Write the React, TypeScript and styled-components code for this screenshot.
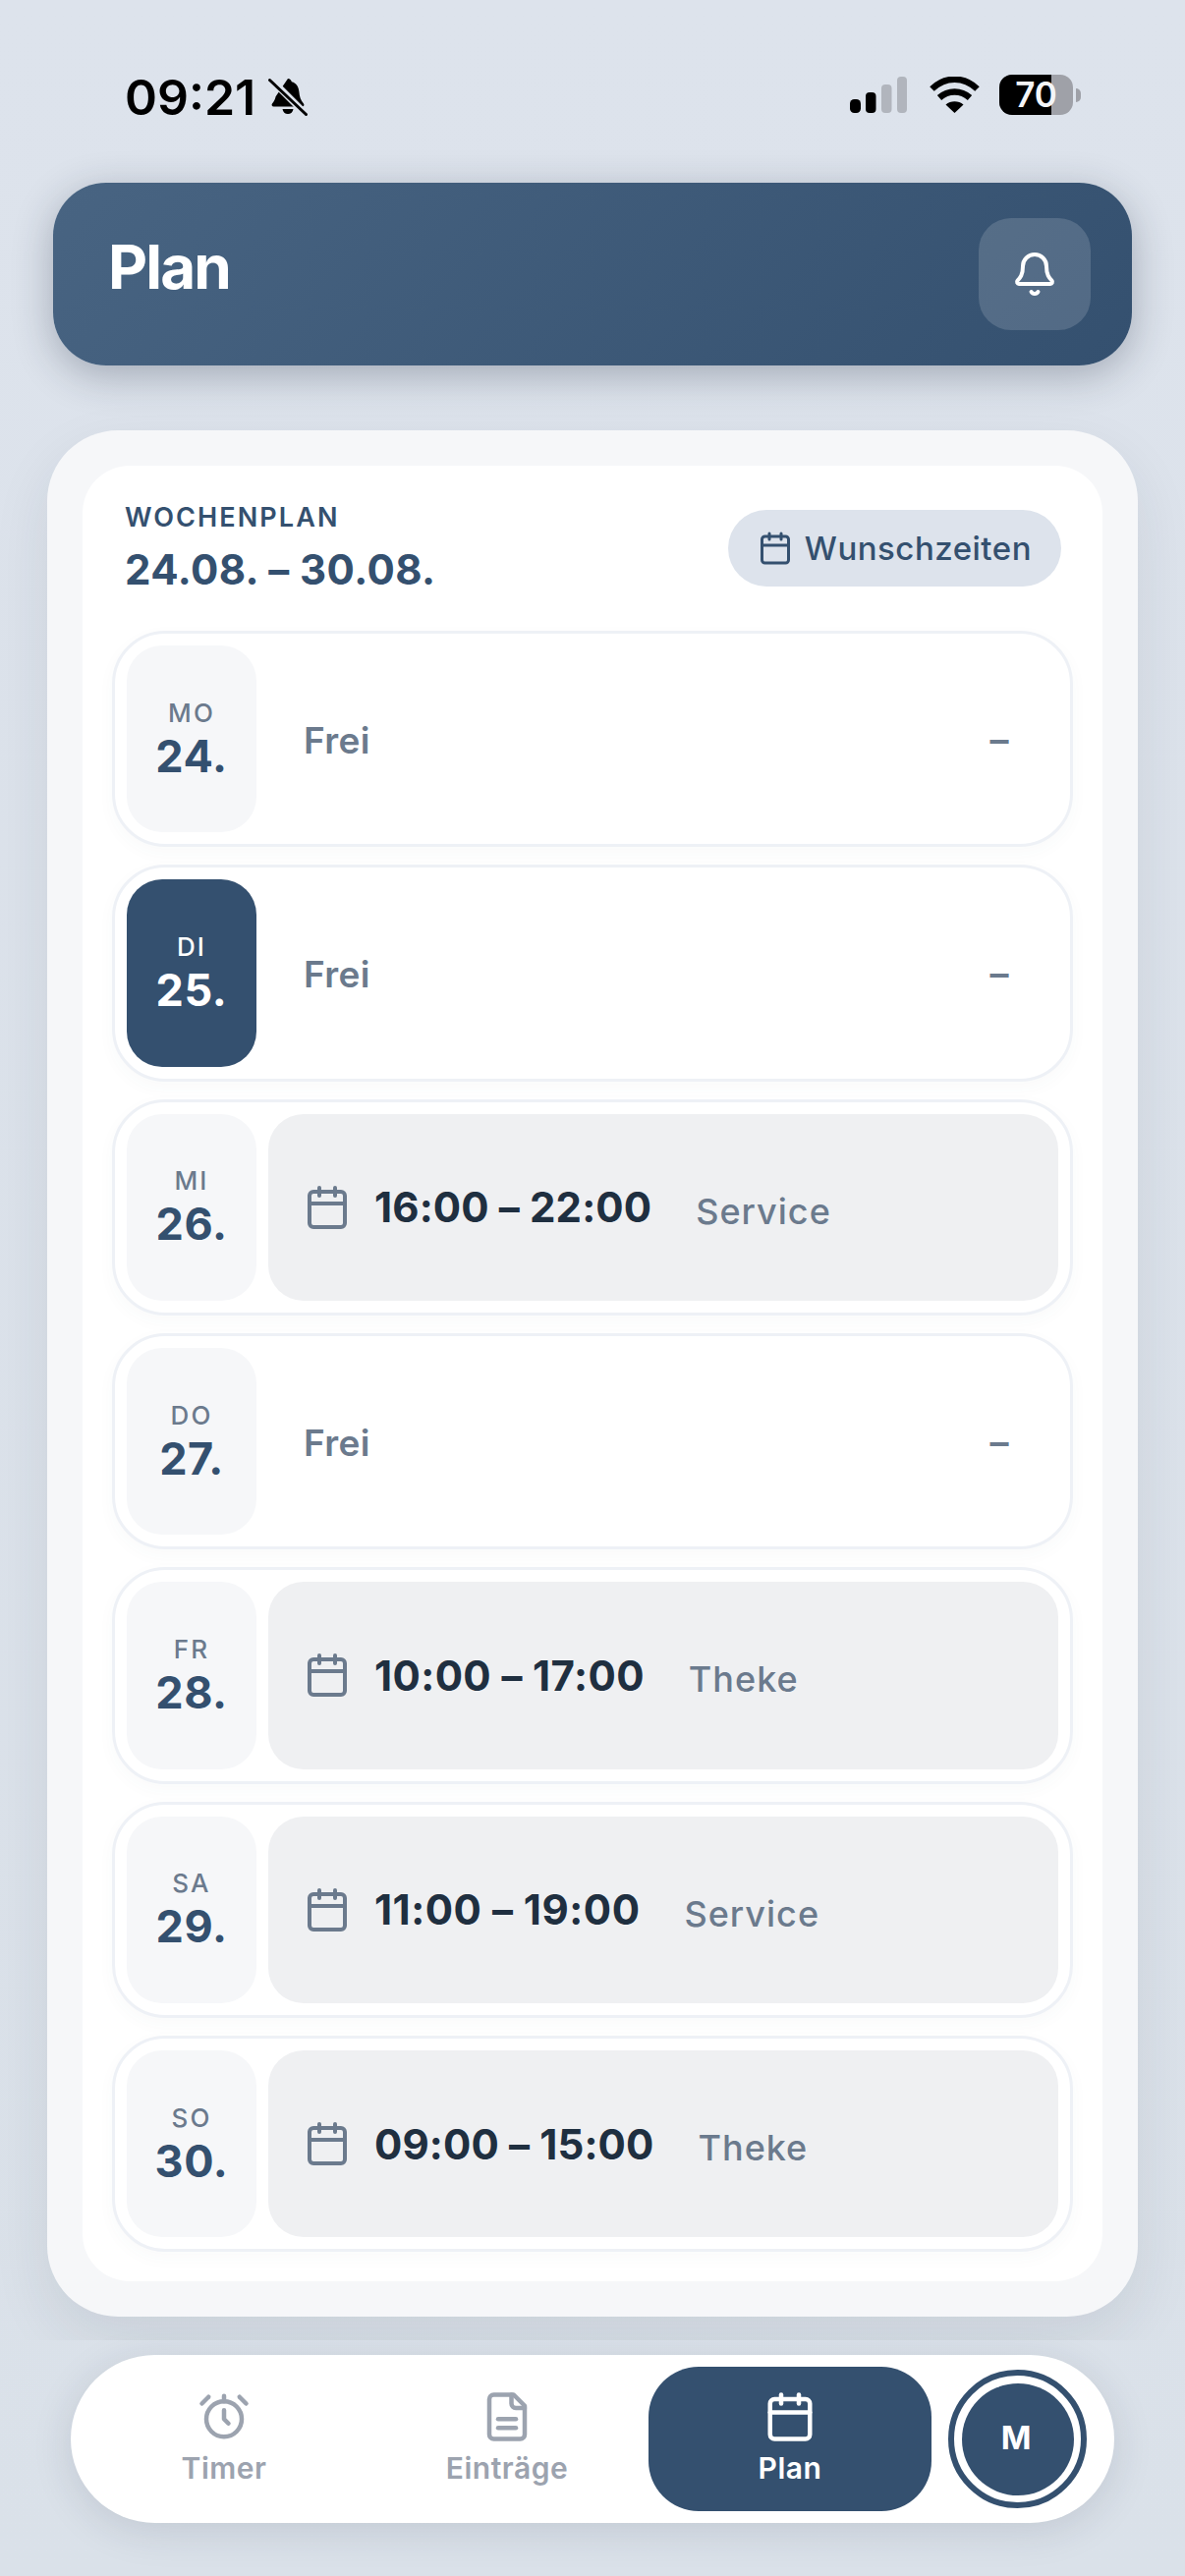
import React from "react";
import styled, { createGlobalStyle } from "styled-components";
import { Bell, Calendar } from "lucide-react";

const Global = createGlobalStyle`
  html, body { margin: 0; padding: 0; background: #dde3ec; }
  body { font-family: Inter, "Liberation Sans", sans-serif; }
  * { box-sizing: border-box; }
`;

const Page = styled.div`
  width: 1206px;
  height: 2622px;
  display: flex;
  flex-direction: column;
  overflow: hidden;
  background: linear-gradient(180deg, #dde3ec 0%, #dae1e9 100%);
`;

const StatusBar = styled.div`
  height: 186px;
  flex: none;
  display: flex;
  align-items: flex-start;
  justify-content: space-between;
  padding: 74px 106px 0 127px;
`;

const StatusLeft = styled.div`
  display: flex;
  align-items: center;
  gap: 12px;
`;

const Clock = styled.span`
  font-size: 50px;
  line-height: 50px;
  font-weight: 600;
  color: #000;
`;

const StatusRight = styled.div`
  display: flex;
  align-items: center;
  gap: 20px;
  padding-top: 2px;
`;

const SignalSlot = styled.div`
  display: flex;
  margin-right: 3px;
`;

const Battery = styled.div`
  position: relative;
  width: 75px;
  height: 41px;
  border-radius: 13px;
  overflow: hidden;
  background: #9fa1a8;
  display: flex;
  align-items: center;
  justify-content: center;
`;

const BatteryFill = styled.div`
  position: absolute;
  left: 0;
  top: 0;
  bottom: 0;
  background: #000;
`;

const BatteryLabel = styled.span`
  position: relative;
  font-size: 35px;
  line-height: 41px;
  font-weight: 600;
  color: #f4f5f7;
`;

const BatteryGroup = styled.div`
  display: flex;
  align-items: center;
  gap: 3px;
`;

const BatteryCap = styled.div`
  width: 5px;
  height: 14px;
  border-radius: 0 7px 7px 0;
  background: #9fa1a8;
`;

const Header = styled.header`
  flex: none;
  height: 186px;
  margin: 0 54px;
  border-radius: 54px;
  display: flex;
  align-items: center;
  justify-content: space-between;
  padding: 0 42px 0 56px;
  background: linear-gradient(135deg, #486482 0%, #34506f 100%);
  box-shadow: 0 10px 40px rgba(30, 40, 60, 0.3);
  position: relative;
  z-index: 2;
`;

const Title = styled.h1`
  margin: 0 0 14px;
  font-size: 62px;
  line-height: 72px;
  font-weight: 700;
  color: #fff;
  letter-spacing: -1.9px;
`;

const BellButton = styled.button`
  width: 114px;
  height: 114px;
  border: 0;
  padding: 0;
  border-radius: 33px;
  background: rgba(255, 255, 255, 0.15);
  color: #fff;
  display: flex;
  align-items: center;
  justify-content: center;
`;

const Scroller = styled.main`
  flex: none;
  height: 2010px;
  padding: 66px 48px 0;
  overflow: hidden;
`;

const OuterCard = styled.section`
  height: 1920px;
  padding: 36px;
  border-radius: 72px;
  background: #f6f7f9;
  box-shadow: 0 24px 60px rgba(30, 40, 60, 0.09);
`;

const InnerCard = styled.div`
  height: 1848px;
  padding: 0 30px;
  border-radius: 48px;
  background: #fff;
`;

const SectionHead = styled.div`
  height: 168px;
  display: flex;
  align-items: flex-start;
  justify-content: space-between;
  padding: 37px 12px 0 13px;
`;

const Eyebrow = styled.div`
  font-size: 27px;
  line-height: 32px;
  font-weight: 600;
  letter-spacing: 2.1px;
  color: #34506f;
`;

const WeekRange = styled.div`
  margin-top: 12px;
  font-size: 42px;
  line-height: 50px;
  font-weight: 700;
  letter-spacing: 0.45px;
  color: #34506f;
`;

const WishButton = styled.button`
  height: 78px;
  margin-top: 8px;
  padding: 0 30px;
  border: 0;
  border-radius: 39px;
  background: #dde3ec;
  color: #34506f;
  display: flex;
  align-items: center;
  gap: 12px;
  font-family: inherit;
  font-size: 33px;
  font-weight: 550;
  letter-spacing: 0.5px;
`;

const DayList = styled.div`
  display: flex;
  flex-direction: column;
  gap: 18px;
`;

const Row = styled.div`
  height: 220.33px;
  padding: 12px;
  border: 3px solid #eef1f6;
  border-radius: 54px;
  background: #fff;
  display: flex;
  gap: 12px;
  box-shadow: 0 6px 18px rgba(52, 80, 111, 0.03);
`;

const DateBox = styled.div<{ $today?: boolean }>`
  flex: none;
  width: 132px;
  border-radius: 36px;
  background: ${(p) => (p.$today ? "#34506f" : "#f6f7f9")};
  color: ${(p) => (p.$today ? "#fff" : "#34506f")};
  display: flex;
  flex-direction: column;
  align-items: center;
  justify-content: center;
`;

const Weekday = styled.div<{ $today?: boolean }>`
  font-size: 26px;
  line-height: 32px;
  font-weight: 500;
  letter-spacing: 2.2px;
  color: ${(p) => (p.$today ? "#fff" : "#6b7a8d")};
`;

const DayNumber = styled.div`
  margin-top: 3px;
  font-size: 45px;
  line-height: 50px;
  font-weight: 700;
  letter-spacing: 0.6px;
`;

const FreeSlot = styled.div`
  flex: 1;
  display: flex;
  align-items: center;
  justify-content: space-between;
  padding: 0 50px 0 36px;
  color: #6b7a8d;
  font-size: 37px;
  font-weight: 600;
  letter-spacing: 0.4px;
`;

const FreeLabel = styled.span`
  position: relative;
  top: 1px;
`;

const Dash = styled.span`
  position: relative;
  top: 1px;
  font-size: 38px;
  font-weight: 600;
`;

const ShiftSlot = styled.div`
  flex: 1;
  border-radius: 36px;
  background: #eff0f2;
  display: flex;
  align-items: center;
  padding: 0 36px;
  color: #6b7a8d;
`;

const Time = styled.span<{ $track: number }>`
  margin-left: 24px;
  font-size: 42px;
  font-weight: 700;
  letter-spacing: ${(p) => p.$track}px;
  color: #1f2f40;
`;

const Role = styled.span`
  margin-left: 45px;
  margin-top: 8px;
  font-size: 36px;
  font-weight: 500;
  letter-spacing: 1px;
  color: #6b7a8d;
`;

const Nav = styled.nav`
  flex: none;
  height: 171px;
  margin: 15px 72px 0;
  padding: 12px 28px 12px 12px;
  border-radius: 85.5px;
  background: #fff;
  display: flex;
  align-items: center;
  box-shadow: 0 8px 40px rgba(30, 40, 60, 0.13);
`;

const Tab = styled.div<{ $active?: boolean }>`
  flex: none;
  width: 288px;
  height: 147px;
  padding-bottom: 3px;
  border-radius: 51px;
  background: ${(p) => (p.$active ? "#34506f" : "transparent")};
  color: ${(p) => (p.$active ? "#fff" : "#9ca3af")};
  display: flex;
  flex-direction: column;
  align-items: center;
  justify-content: center;
  gap: 7px;
  font-size: 30px;
  line-height: 36px;
  font-weight: 600;
  letter-spacing: 0.5px;
`;

const Avatar = styled.div`
  flex: none;
  width: 141px;
  height: 141px;
  margin-left: 17px;
  border-radius: 50%;
  border: 6px solid #34506f;
  padding: 7.5px;
  background: #fff;
`;

const AvatarInner = styled.div`
  width: 100%;
  height: 100%;
  padding: 0 3px 3px 0;
  border-radius: 50%;
  background: #34506f;
  color: #fff;
  display: flex;
  align-items: center;
  justify-content: center;
  font-size: 33px;
  font-weight: 700;
`;

type Day = { wd: string; num: string; today?: boolean; time?: string; role?: string; track?: number };

const days: Day[] = [
  { wd: "MO", num: "24." },
  { wd: "DI", num: "25.", today: true },
  { wd: "MI", num: "26.", time: "16:00 – 22:00", role: "Service", track: 0.13 },
  { wd: "DO", num: "27." },
  { wd: "FR", num: "28.", time: "10:00 – 17:00", role: "Theke", track: 0.39 },
  { wd: "SA", num: "29.", time: "11:00 – 19:00", role: "Service", track: 0.51 },
  { wd: "SO", num: "30.", time: "09:00 – 15:00", role: "Theke", track: 0.13 },
];

const BellSlash = () => (
  <svg width="42" height="42" viewBox="0 0 42 42" aria-hidden="true">
    <path d="M21 2c2 0 3.400 1.400 3.800 3.200 5 1.300 7.200 5.600 7.600 10.200.4 4.600 1.500 8.400 4.600 12 1 1.400.2 3-1.600 3H6.600c-1.800 0-2.600-1.600-1.600-3 2-2.400 3-4.600 3.600-7.200L21 2z" fill="#000" />
    <path d="M15.500 33h11c-.4 3-2.600 5-5.500 5s-5.100-2-5.500-5z" fill="#000" />
    <path d="M3 2l36 36" stroke="#dde3ec" strokeWidth="7" />
    <path d="M2.500 3.500l37 35" stroke="#000" strokeWidth="3" strokeLinecap="round" />
  </svg>
);

const Signal = () => (
  <svg width="58" height="37" viewBox="0 0 58 37" aria-hidden="true">
    <rect x="0" y="23" width="11" height="14" rx="4.500" fill="#000" />
    <rect x="16" y="16" width="10.500" height="21" rx="4" fill="#000" />
    <rect x="32" y="8" width="10.500" height="29" rx="4" fill="#b1b5bd" />
    <rect x="48" y="0" width="10" height="37" rx="4" fill="#b1b5bd" />
  </svg>
);

const Wifi = () => (
  <svg width="51" height="37" viewBox="0 0 51 37" aria-hidden="true">
    <path d="M25.500 37L16.500 28.500c5-4.400 13-4.400 18 0z" fill="#000" />
    <path d="M10 21.500C19 13.500 32 13.500 41 21.500" fill="none" stroke="#000" strokeWidth="6.500" />
    <path d="M2.500 12.500C16-.5 35-.5 48.500 12.500" fill="none" stroke="#000" strokeWidth="6.500" />
  </svg>
);

const TimerIcon = () => (
  <svg width="54" height="54" viewBox="0 0 24 24" fill="none" stroke="currentColor" strokeWidth="2" strokeLinecap="round" strokeLinejoin="round" aria-hidden="true">
    <circle cx="12" cy="13" r="8" />
    <path d="M12 9v4l2 2" />
    <path d="M5 3 2 6" />
    <path d="m22 6-3-3" />
    <path d="M12 2.500V5" />
  </svg>
);

const EntriesIcon = () => (
  <svg width="54" height="54" viewBox="0 0 24 24" fill="none" stroke="currentColor" strokeWidth="2" strokeLinecap="round" strokeLinejoin="round" aria-hidden="true">
    <path d="M15 2H6a2 2 0 0 0-2 2v16a2 2 0 0 0 2 2h12a2 2 0 0 0 2-2V7Z" />
    <path d="M14 2v4a2 2 0 0 0 2 2h4" />
    <path d="M8 13h8" />
    <path d="M8 17h8" />
  </svg>
);

export default function App() {
  return (
    <Page>
      <Global />
      <StatusBar>
        <StatusLeft>
          <Clock>09:21</Clock>
          <BellSlash />
        </StatusLeft>
        <StatusRight>
          <SignalSlot>
            <Signal />
          </SignalSlot>
          <Wifi />
          <BatteryGroup>
            <Battery>
              <BatteryFill style={{ width: "70%" }} />
              <BatteryLabel>70</BatteryLabel>
            </Battery>
            <BatteryCap />
          </BatteryGroup>
        </StatusRight>
      </StatusBar>

      <Header>
        <Title>Plan</Title>
        <BellButton aria-label="Benachrichtigungen">
          <Bell size={48} strokeWidth={2} />
        </BellButton>
      </Header>

      <Scroller>
        <OuterCard>
          <InnerCard>
            <SectionHead>
              <div>
                <Eyebrow>WOCHENPLAN</Eyebrow>
                <WeekRange>24.08. – 30.08.</WeekRange>
              </div>
              <WishButton>
                <Calendar size={36} strokeWidth={2} />
                Wunschzeiten
              </WishButton>
            </SectionHead>
            <DayList>
              {days.map((d) => (
                <Row key={d.num}>
                  <DateBox $today={d.today}>
                    <Weekday $today={d.today}>{d.wd}</Weekday>
                    <DayNumber>{d.num}</DayNumber>
                  </DateBox>
                  {d.time ? (
                    <ShiftSlot>
                      <Calendar size={48} strokeWidth={2} />
                      <Time $track={d.track ?? 0}>{d.time}</Time>
                      <Role>{d.role}</Role>
                    </ShiftSlot>
                  ) : (
                    <FreeSlot>
                      <FreeLabel>Frei</FreeLabel>
                      <Dash>–</Dash>
                    </FreeSlot>
                  )}
                </Row>
              ))}
            </DayList>
          </InnerCard>
        </OuterCard>
      </Scroller>

      <Nav>
        <Tab>
          <TimerIcon />
          Timer
        </Tab>
        <Tab>
          <EntriesIcon />
          Einträge
        </Tab>
        <Tab $active>
          <Calendar size={54} strokeWidth={2} />
          Plan
        </Tab>
        <Avatar>
          <AvatarInner>M</AvatarInner>
        </Avatar>
      </Nav>
    </Page>
  );
}
